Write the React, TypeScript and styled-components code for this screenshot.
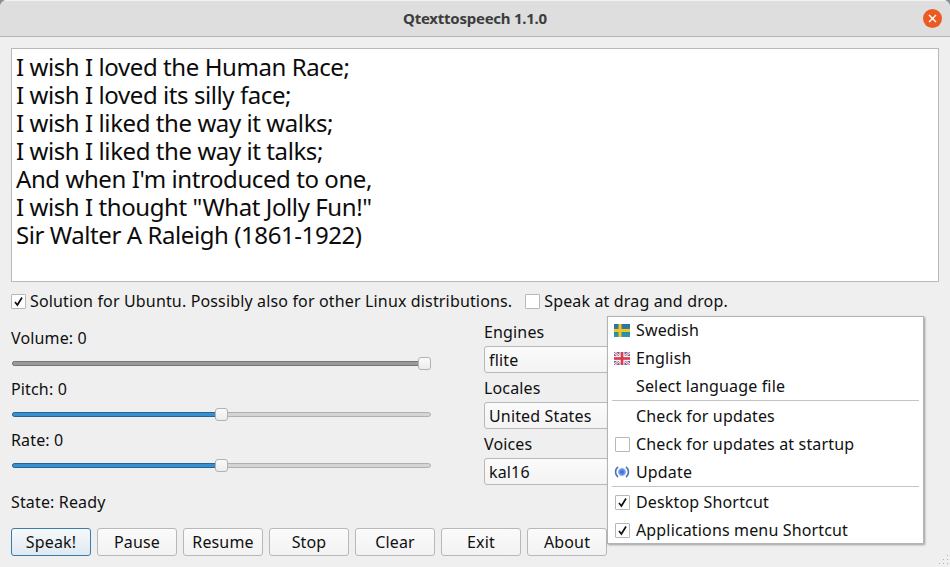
import React from 'react'
import styled, { createGlobalStyle } from 'styled-components'

const GlobalStyle = createGlobalStyle`
	html, body {
		margin: 0;
		padding: 0;
		background: #8a8f94;
	}
	* {
		box-sizing: border-box;
	}
`

const Window = styled.div`
	position: relative;
	width: 950px;
	height: 567px;
	overflow: hidden;
	background: #efefef;
	border-radius: 7px 7px 0 0;
	color: #101010;
	font-family: 'Noto Sans', 'DejaVu Sans', sans-serif;
	font-size: 16px;
	letter-spacing: 0.15px;
`

const TitleBar = styled.header`
	display: grid;
	grid-template-columns: 1fr auto 1fr;
	align-items: center;
	height: 37px;
	padding: 0 8px 1px;
	background: #dedede;
	border-top: 1px solid #f2f2f2;
	border-bottom: 1px solid #b5b5b5;
`

const Title = styled.div`
	grid-column: 2;
	font-size: 15px;
	font-weight: 700;
	letter-spacing: -0.25px;
	color: #3d3d3d;
`

const CloseButton = styled.div`
	grid-column: 3;
	justify-self: end;
	display: flex;
	align-items: center;
	justify-content: center;
	width: 19px;
	height: 19px;
	border-radius: 50%;
	background: #ec5a23;
`

const Content = styled.main`
	display: flex;
	flex-direction: column;
	padding: 11px 11px 0;
`

const Editor = styled.div`
	height: 234px;
	padding: 4px 4px;
	background: #ffffff;
	border: 1px solid #b9b9b9;
	font-size: 24px;
	line-height: 28px;
	letter-spacing: -0.42px;
	color: #0c0c0c;
`

const OptionsRow = styled.div`
	display: flex;
	align-items: center;
	gap: 13px;
	height: 20px;
	margin-top: 9px;
`

const CheckLabel = styled.label`
	display: flex;
	align-items: center;
	gap: 4px;
`

const Box = styled.span`
	display: flex;
	align-items: center;
	justify-content: center;
	flex: none;
	width: 15px;
	height: 15px;
	background: #ffffff;
	border: 1px solid #b8b8b8;
	border-radius: 1px;
`

const Columns = styled.div`
	display: flex;
	justify-content: space-between;
	width: 700px;
	margin-top: 13px;
`

const LeftColumn = styled.div`
	display: flex;
	flex-direction: column;
	width: 420px;
	padding-top: 4px;
`

const SliderGroup = styled.div`
	display: flex;
	flex-direction: column;
	height: 51px;
`

const FieldLabel = styled.div`
	height: 20px;
	line-height: 20px;
`

const Slider = styled.div`
	position: relative;
	height: 5px;
	margin: 13px 0 0 1px;
	background: #d4d4d4;
	border: 1px solid #b0b0b0;
	border-radius: 3px;
`

const SliderFill = styled.div<{ $percent: number; $muted?: boolean }>`
	position: absolute;
	left: -1px;
	top: -1px;
	bottom: -1px;
	width: ${p => p.$percent}%;
	background: ${p => (p.$muted ? '#9a9a9a' : '#3a8fd0')};
	border: 1px solid ${p => (p.$muted ? '#747474' : '#22679b')};
	border-radius: 3px;
`

const SliderThumb = styled.div<{ $percent: number }>`
	position: absolute;
	top: -5px;
	left: calc((100% - 12px) * ${p => p.$percent / 100});
	width: 13px;
	height: 13px;
	background: linear-gradient(#fafafa, #ececec);
	border: 1px solid #b2b2b2;
	border-radius: 3px;
`

const StateText = styled.div`
	height: 20px;
	line-height: 20px;
	margin-top: 11px;
`

const RightColumn = styled.div`
	display: flex;
	flex-direction: column;
	width: 227px;
`

const ComboGroup = styled.div`
	display: flex;
	flex-direction: column;
	height: 56px;
`

const ComboLabel = styled.div`
	height: 20px;
	line-height: 20px;
	margin-top: -2px;
	margin-bottom: 4px;
`

const Combo = styled.div`
	display: flex;
	align-items: center;
	height: 27px;
	padding-left: 4px;
	background: linear-gradient(#fbfbfb, #f3f3f3);
	border: 1px solid #b8b8b8;
	border-radius: 3px;
`

const ButtonRow = styled.div`
	display: flex;
	gap: 6px;
	margin-top: 16px;
`

const PushButton = styled.button<{ $focused?: boolean }>`
	width: 80px;
	height: 28px;
	padding: 0;
	font: inherit;
	letter-spacing: inherit;
	color: inherit;
	background: ${p =>
		p.$focused ? 'linear-gradient(#f6f9fb, #dfe9f1)' : 'linear-gradient(#fbfbfb, #f2f2f2)'};
	border: 1px solid ${p => (p.$focused ? '#3a7ca8' : '#b8b8b8')};
	border-radius: 3px;
`

const Menu = styled.nav`
	position: absolute;
	left: 607px;
	top: 316px;
	width: 317px;
	height: 228px;
	background: #ffffff;
	border: 1px solid #b4b4b4;
	box-shadow: 1px 1px 2px rgba(0, 0, 0, 0.35);
`

const MenuList = styled.div`
	margin-top: -1px;
`

const MenuItem = styled.div`
	display: flex;
	align-items: center;
	gap: 6px;
	height: 28px;
	padding-left: 6px;
`

const MenuIcon = styled.span`
	display: flex;
	align-items: center;
	justify-content: center;
	flex: none;
	width: 16px;
	height: 16px;
`

const MenuSeparator = styled.div`
	height: 1px;
	margin: 0 4px 1px 4px;
	background: #c4c4c4;
`

const Grip = styled.svg`
	position: absolute;
	right: 0;
	bottom: 0;
`

const Check = () => (
	<svg width="11" height="11" viewBox="0 0 11 11">
		<path d="M2 6 L4.4 9 L9 1.5" fill="none" stroke="#111" strokeWidth="1.7" />
	</svg>
)

const SwedishFlag = () => (
	<svg width="16" height="13" viewBox="0 0 16 13">
		<defs>
			<linearGradient id="se" x1="0" y1="0" x2="0" y2="1">
				<stop offset="0" stopColor="#2f6f9f" />
				<stop offset="1" stopColor="#2a9aa8" />
			</linearGradient>
		</defs>
		<rect width="16" height="13" fill="url(#se)" />
		<rect x="4.5" width="3" height="13" fill="#f2c521" />
		<rect y="5" width="16" height="3" fill="#f2c521" />
	</svg>
)

const EnglishFlag = () => (
	<svg width="16" height="13" viewBox="0 0 16 13">
		<rect width="16" height="13" fill="#5b6aa0" />
		<path d="M0 0 L16 13 M16 0 L0 13" stroke="#f3e6ea" strokeWidth="2.6" />
		<path d="M0 0 L16 13 M16 0 L0 13" stroke="#d9506a" strokeWidth="0.9" />
		<rect x="5.5" width="5" height="13" fill="#f6eef0" />
		<rect y="4" width="16" height="5" fill="#f6eef0" />
		<rect x="6.7" width="2.6" height="13" fill="#d8394f" />
		<rect y="5.2" width="16" height="2.6" fill="#d8394f" />
	</svg>
)

const UpdateIcon = () => (
	<svg width="16" height="16" viewBox="0 0 16 16">
		<defs>
			<radialGradient id="up">
				<stop offset="0" stopColor="#2d5fd0" />
				<stop offset="0.7" stopColor="#6f9bec" />
				<stop offset="1" stopColor="#c4d6f4" />
			</radialGradient>
		</defs>
		<circle cx="8" cy="8" r="4.2" fill="url(#up)" />
		<path d="M4 2.9 A6.5 6.5 0 0 0 4 13.1" fill="none" stroke="#4f6fae" strokeWidth="1.6" />
		<path d="M12 2.9 A6.5 6.5 0 0 1 12 13.1" fill="none" stroke="#4f6fae" strokeWidth="1.6" />
	</svg>
)

const poem = [
	'I wish I loved the Human Race;',
	'I wish I loved its silly face;',
	'I wish I liked the way it walks;',
	'I wish I liked the way it talks;',
	"And when I'm introduced to one,",
	'I wish I thought "What Jolly Fun!"',
	'Sir Walter A Raleigh (1861-1922)',
]

const sliders = [
	{ label: 'Volume: 0', percent: 100, thumb: 100, muted: true },
	{ label: 'Pitch: 0', percent: 50, thumb: 49.8, muted: false },
	{ label: 'Rate: 0', percent: 50, thumb: 49.8, muted: false },
]

const combos = [
	{ label: 'Engines', value: 'flite' },
	{ label: 'Locales', value: 'United States' },
	{ label: 'Voices', value: 'kal16' },
]

const buttons = ['Speak!', 'Pause', 'Resume', 'Stop', 'Clear', 'Exit', 'About']

const App = () => (
	<Window>
		<GlobalStyle />
		<TitleBar>
			<Title>Qtexttospeech 1.1.0</Title>
			<CloseButton>
				<svg width="9" height="9" viewBox="0 0 9 9">
					<path d="M1 1 L8 8 M8 1 L1 8" stroke="#fff" strokeWidth="1.4" />
				</svg>
			</CloseButton>
		</TitleBar>

		<Content>
			<Editor>
				{poem.map(line => (
					<div key={line}>{line}</div>
				))}
			</Editor>

			<OptionsRow>
				<CheckLabel>
					<Box>
						<Check />
					</Box>
					Solution for Ubuntu. Possibly also for other Linux distributions.
				</CheckLabel>
				<CheckLabel>
					<Box />
					Speak at drag and drop.
				</CheckLabel>
			</OptionsRow>

			<Columns>
				<LeftColumn>
					{sliders.map(s => (
						<SliderGroup key={s.label}>
							<FieldLabel>{s.label}</FieldLabel>
							<Slider>
								<SliderFill $percent={s.percent} $muted={s.muted} />
								<SliderThumb $percent={s.thumb} />
							</Slider>
						</SliderGroup>
					))}
					<StateText>State: Ready</StateText>
				</LeftColumn>

				<RightColumn>
					{combos.map(c => (
						<ComboGroup key={c.label}>
							<ComboLabel>{c.label}</ComboLabel>
							<Combo>{c.value}</Combo>
						</ComboGroup>
					))}
				</RightColumn>
			</Columns>

			<ButtonRow>
				{buttons.map((b, i) => (
					<PushButton key={b} $focused={i === 0}>
						{b}
					</PushButton>
				))}
			</ButtonRow>
		</Content>

		<Menu>
			<MenuList>
				<MenuItem>
					<MenuIcon>
						<SwedishFlag />
					</MenuIcon>
					Swedish
				</MenuItem>
				<MenuItem>
					<MenuIcon>
						<EnglishFlag />
					</MenuIcon>
					English
				</MenuItem>
				<MenuItem>
					<MenuIcon />
					Select language file
				</MenuItem>
				<MenuSeparator />
				<MenuItem>
					<MenuIcon />
					Check for updates
				</MenuItem>
				<MenuItem>
					<MenuIcon>
						<Box />
					</MenuIcon>
					Check for updates at startup
				</MenuItem>
				<MenuItem>
					<MenuIcon>
						<UpdateIcon />
					</MenuIcon>
					Update
				</MenuItem>
				<MenuSeparator />
				<MenuItem>
					<MenuIcon>
						<Box>
							<Check />
						</Box>
					</MenuIcon>
					Desktop Shortcut
				</MenuItem>
				<MenuItem>
					<MenuIcon>
						<Box>
							<Check />
						</Box>
					</MenuIcon>
					Applications menu Shortcut
				</MenuItem>
			</MenuList>
		</Menu>

		<Grip width="14" height="14" viewBox="0 0 14 14">
			<path
				d="M11 2h1v1h-1z M7 6h1v1H7z M11 6h1v1h-1z M3 10h1v1H3z M7 10h1v1H7z M11 10h1v1h-1z"
				fill="#b0b0b0"
			/>
		</Grip>
	</Window>
)

export default App
